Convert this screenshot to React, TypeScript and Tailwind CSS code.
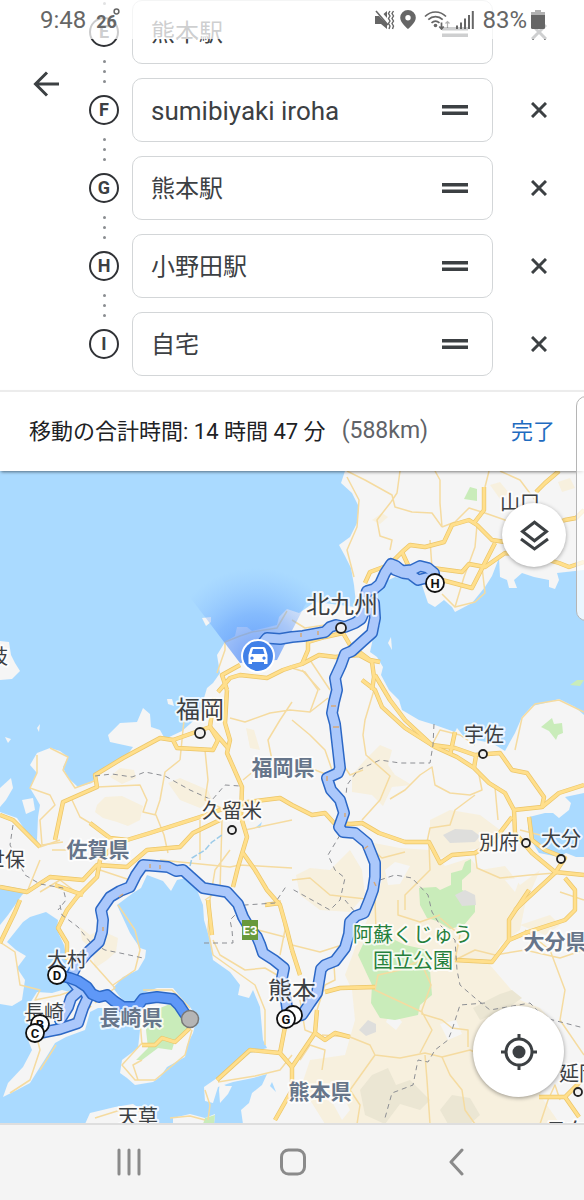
import React from 'react';

const stops = [
  { id: 'E', name: '熊本駅', size: 'text-[24px]' },
  { id: 'F', name: 'sumibiyaki iroha', size: 'text-[26px]' },
  { id: 'G', name: '熊本駅', size: 'text-[24px]' },
  { id: 'H', name: '小野田駅', size: 'text-[24px]' },
  { id: 'I', name: '自宅', size: 'text-[24px]' },
];

const land = [
  // Honshu
  'M347 465L341 483 352 493 359 507 357 523 350 537 339 545 345 556 351 568 354 585 356 603 362 600 366 588 380 584 395 577 409 580 422 585 428 603 435 607 444 600 452 607 455 612 472 603 485 587 492 576 499 558 500 577 507 580 509 588 517 588 514 580 522 573 534 577 549 580 549 587 555 589 559 580 557 573 584 570 584 465Z',
  // Kyushu
  'M379 599L379 610 376 618 380 625 374 632 372 643 370 652 377 657 383 667 381 675 389 690 399 700 402 710 419 720 435 725 455 732 457 728 465 738 492 743 505 751 515 733 522 717 532 706 545 703 559 699 575 707 584 715 584 793 565 797 571 803 569 810 559 818 553 813 545 813 529 817 528 828 531 840 539 853 559 857 566 853 576 857 584 857 584 1124 243 1124 241 1110 249 1103 252 1093 262 1085 267 1074 253 1078 233 1082 218 1087 213 1103 205 1101 204 1087 217 1078 233 1067 250 1053 267 1048 263 1040 260 1007 253 990 249 998 238 995 240 985 230 972 213 960 210 940 204 920 203 905 197 890 190 877 177 880 171 891 163 881 147 875 141 888 133 893 117 905 130 933 140 948 146 950 145 958 138 970 123 977 113 988 120 997 127 1003 137 1002 143 993 157 988 173 988 183 1000 190 1007 197 1017 193 1033 187 1045 185 1057 167 1067 160 1077 153 1082 135 1085 127 1078 120 1073 122 1060 138 1048 140 1030 133 1014 115 1008 98 1008 90 1012 85 1030 66 1037 55 1043 47 1056 40 1067 30 1083 17 1090 3 1097 8 1083 23 1067 32 1050 28 1040 33 1030 25 1020 27 1008 37 992 52 993 62 990 78 994 72 975 67 960 64 945 57 930 58 920 46 912 30 917 23 922 7 942 16 950 26 956 17 968 25 980 22 1000 12 1006 0 1004 0 925 8 915 22 895 27 890 0 885 0 812 17 818 27 833 37 840 38 817 40 805 36 798 30 788 37 773 30 765 37 753 50 748 60 751 68 757 63 767 67 777 78 787 92 783 97 773 110 767 125 758 133 747 110 742 108 735 120 723 137 722 143 708 150 714 151 727 160 730 165 739 182 731 190 724 202 712 204 698 207 688 213 683 220 673 217 655 225 642 235 636 237 627 247 627 252 631 277 625 279 617 287 609 299 613 315 602 340 605 355 607 366 603Z',
  // islands
  'M0 641L9 642 11 655 15 663 20 671 12 679 0 680Z',
  'M202 618L211 617 211 622 206 626Z',
  'M0 788L11 778 13 788 6 800 0 807Z',
  'M22 800L33 798 35 810 26 814Z',
  'M37 728L40 724 39 732Z',
  'M5 737L11 739 8 743Z',
  'M167 699L172 699 174 706 168 704Z',
  'M388 643L391 637 392 650Z',
  'M85 1124L90 1113 115 1107 133 1104 147 1113 160 1124Z',
  'M173 1118L190 1114 205 1118 215 1114 214 1124 173 1124Z',
  'M220 1082L226 1086 232 1086 228 1094 220 1103 219 1090Z',
];

const hills = [
  'M97 805L105 797 122 796 143 806 140 820 128 826 117 822 103 818 95 812Z',
  'M168 783L180 778 208 790 212 800 200 808 180 800Z',
  'M110 777L120 768 134 770 136 778 122 784Z',
  'M80 927L90 935 100 930 118 938 116 952 107 960 95 968 92 950 82 940Z',
  'M352 775L365 760 380 745 392 750 388 765 395 775 412 785 392 787 383 806 372 795 352 792Z',
  'M358 840L400 848 430 850 445 866 470 858 480 870 505 866 520 885 540 870 525 905 520 930 500 945 490 965 520 1000 540 1008 560 1030 555 1060 540 1095 560 1124 325 1124 310 1100 300 1090 310 1060 345 1055 355 1020 352 990 345 975 358 940 374 905 382 880 372 860Z',
  'M430 820L450 810 480 815 500 830 495 845 470 850 440 858 430 840Z',
  'M296 875L310 868 330 870 350 850 362 870 365 895 350 912 320 910 300 895Z',
  'M490 485L500 482 509 493 500 499Z',
  'M558 482L570 478 575 488 562 492Z',
  'M246 728L254 730 260 750 250 748Z',
  'M372 520L382 513 388 517 380 524Z',
  'M520 925L550 915 560 925 545 935Z',
];

const shades = [
  'M443 835L455 829 472 830 480 836 475 842 450 843Z',
  'M359 1030L368 1020 376 1024 376 1032 366 1036Z',
  'M455 895L465 890 475 895 476 905 462 906Z',
];

const peaks = [
  'M488 1000L500 994 512 990 522 998 505 1010 480 1020 473 1008Z',
  'M360 1090L372 1075 388 1068 396 1085 410 1080 430 1100 420 1110 400 1104 385 1124 365 1115Z',
  'M440 1110L452 1095 470 1098 480 1115 470 1124 448 1124Z',
];

// valleys that cut into the hills
const plains = [
  'M385 870L395 862 410 866 400 884 388 885Z',
  'M440 1024L456 1020 462 1034 448 1040Z',
  'M330 1098L340 1090 350 1110 342 1120Z',
  'M392 1010L402 1022 396 1030 386 1022Z',
  'M505 880L520 878 515 892Z',
  'M490 1062L505 1056 515 1075 500 1082Z',
];

const parks = [
  'M464 499L470 487 477 489 477 501Z',
  'M541 727L552 718 554 724 562 723 563 733 558 735 556 740 549 731Z',
  'M419 888L436 887 440 890 451 885 451 873 462 870 465 862 471 859 471 872 462 880 462 890 475 896 475 912 464 925 450 929 437 921 427 918 420 905Z',
  'M365 940L385 935 405 945 428 950 430 970 432 995 420 1005 418 1015 395 1020 380 1018 371 1003 372 985 365 970 358 955Z',
  'M170 1004L180 1014 187 1018 187 1032 175 1040 172 1050 158 1048 142 1060 136 1060 148 1048 146 1030 150 1012Z',
  'M205 1118L215 1115 214 1124 203 1124Z',
  'M570 685L577 680 584 680 580 686Z',
];

const waters = [
  'M255 828L262 822 260 828Z',
  'M28 836L36 838 40 846 36 844Z',
  'M272 1082L276 1092 270 1086Z',
];

const minorRoads = [
  'M347 477L359 500 357 527 347 550 354 577',
  'M347 471L365 480 392 495 395 507 412 512 432 513 442 527 M435 471L440 480 440 503 442 527 M400 471L397 493 391 502',
  'M391 502L377 520 380 536 392 540 390 550 M442 527L455 522 469 508 485 513',
  'M477 525L475 547 464 577 455 607 475 602 485 593 482 567 M432 568L430 540 M489 471L485 487 M500 471L520 480 535 500',
  'M442 594L455 607 M485 513L505 520 520 535',
  'M225 642L240 636 252 632 277 628 287 611 M217 673L225 650 225 642',
  'M292 620L305 628 325 625 M302 670L320 690 M330 690L310 660',
  'M230 718L245 722 270 713 290 710 310 712 328 698 M292 702L280 720 268 740 272 760 255 770 243 780',
  'M292 720L310 735 325 750 332 770 M310 712L318 690 305 672 292 668 M328 775L310 768 300 772',
  'M374 690L365 720 363 735 366 755 390 776 380 800 362 820 M363 770L350 775 340 760',
  'M390 799L405 790 420 775 432 767 435 785 450 793 470 795 482 790 478 770 474 768',
  'M432 745L440 730 460 735 475 745 M427 842L430 828 450 825 455 810 475 795 M495 787L498 820',
  'M515 750L522 718 535 704 559 700 584 712',
  'M50 748L68 757 63 770 75 788 97 780 M37 755L37 773 30 788 50 795 55 805 40 820 42 845 63 842',
  'M97 787L140 785 147 800 143 812 156 815 164 835 168 853 M180 760L165 772 160 800 155 815 M180 760L185 710',
  'M205 750L208 780 205 800 225 810 M200 820L200 860 M72 800L80 817 90 823 M52 850L75 850',
  'M40 847L60 840 M27 892L40 860 M80 895L60 880 40 892 M100 870L130 880 M160 860L230 867 240 865 292 868',
  'M245 830L292 820 M210 900L215 870 230 850 M222 820L220 890 205 900',
  'M118 905L135 930 140 950 135 970 113 985 M90 960L115 988 95 1003',
  'M0 942L15 952 20 985 40 990 35 1000 60 995 75 990 M30 1010L40 1050 30 1080 10 1093 M56 1045L40 1070',
  'M143 990L172 990 190 1008 M142 1043L122 1065 135 1080 155 1080 185 1055 192 1030 M140 1020L142 1045 M142 1060L133 1065 138 1080',
  'M213 940L220 955 245 970 265 968 277 975 M210 900L208 930 213 955 255 985 265 1010 265 1045',
  'M258 930L285 937 M280 900L285 930 280 955 M292 945L320 952 345 944',
  'M218 1082L255 1076 280 1070 292 1055 M205 1090L210 1105 208 1120',
  'M300 1000L305 1030 325 1038 M317 1010L325 985 335 980 334 965 M300 1060L310 1045 325 1050 322 1070',
  'M322 1035L350 1037 370 1045 375 1055 400 1058 425 1053 442 1057 470 1050 485 1057',
  'M425 1055L427 1080 430 1124 M420 1053L432 1030 422 1012 375 990 378 975 400 970 420 960 431 985 422 1010 422 1014 442 1020 452 1028 468 1030 468 1047',
  'M442 1057L450 1075 462 1090 465 1110 475 1124 M375 1055L350 1090 360 1105 357 1124',
  'M375 900L376 930 M398 900L398 915 420 922 440 915 M440 918L460 935 455 960 M292 880L310 878 330 895 375 900',
  'M405 910L405 895 430 870 429 845 M525 930L550 950 565 990 560 1020 584 1055 M455 960L475 950 495 955 525 950 560 958 584 950',
  'M373 850L382 858 405 852 M475 852L477 868 500 878 530 875 555 873 M520 830L540 835 M584 900L560 892',
  'M560 1100L555 1085 548 1100 540 1124 M170 1118L190 1116 205 1120 M95 1118L130 1107 150 1115',
];

const mainRoads = [
  'M365 583L370 572 389 565 402 552 410 545 425 547 444 542 452 525 469 520 477 525 492 540 505 542 565 520 576 518 584 510',
  'M432 568L462 572 469 564 485 567 505 553 530 555 559 563 569 567 584 562',
  'M442 580L472 588 495 543 M484 487L484 510 474 523 M536 492L545 483 559 471 M402 552L408 565',
  'M292 667L302 664 319 655 335 657 359 655 372 662 374 677 372 690',
  'M302 664L308 650 308 642 325 637 343 633 350 645 370 660 380 662',
  'M218 692L230 678 240 675 267 678 283 670 292 667 M227 690L222 675 240 665',
  'M214 698L210 727 173 740 177 748 213 750 218 740 210 727',
  'M173 740L160 738 123 758 95 775 97 787 63 802 55 840',
  'M227 690L225 723 230 740 227 753 242 787 241 817 247 837 238 867 233 887',
  'M210 727L228 748',
  'M350 824L334 823 325 813 312 815 292 805 280 798 240 803 200 817 150 833 127 840 110 850 100 860 97 877 77 897 67 910 58 928 67 943 67 960',
  'M90 823L110 838 127 840 M220 820L193 833 180 847 147 850 127 867 97 865 83 880 50 877 27 892 0 887 M83 895L55 885',
  'M0 815L13 820 40 847 M243 853L255 870 267 890 280 905 287 930 292 950',
  'M350 824L362 823 379 833 405 842 429 842 440 863 452 855 475 853 492 843 512 817',
  'M362 680L375 690 382 707 405 728 435 747 457 757 474 768 489 783 505 793 514 810 515 833 532 853 555 872 584 875',
  'M375 675L390 700 405 720 432 745 455 748 475 755 500 753 512 770 527 773 544 797 542 807 514 810 M455 732L450 755 M474 768L476 756',
  'M584 785L559 793 542 807 M529 817L532 840 545 850 565 858 555 873 529 897 515 910',
  'M565 878L575 890 575 910 565 920 528 932 509 940 492 962 455 960 M529 890L509 920 509 940',
  'M317 1010L315 1033 292 1067 292 1090 275 1120 M315 1033L325 1040 335 1033 350 1037 M325 992L340 988 375 987',
  'M292 1067L280 1053 250 1050 217 1080 M285 1027L280 1053 M265 905L280 903 M292 950L300 975',
  'M539 1097L565 1097 582 1080 M565 1097L579 1117 M142 1045L155 1045 162 1038 175 1042 190 1028',
  'M0 943L15 912 20 900 M208 900L212 935 M40 1035L60 1033 90 1005',
];

const borders = [
  'M95 776L112 774 132 777 145 772 165 776 190 790 212 800 225 785 240 786',
  'M13 825L10 845 25 875 40 884 63 888 66 900 58 910',
  'M60 905L62 915 78 927 90 942 105 950 120 953 143 958',
  'M204 943L233 943 232 930 230 920 245 905 275 903 287 885',
  'M434 724L433 745 430 763 400 763 380 760 358 770 347 785 346 795',
  'M340 835L328 855 335 870 345 878 340 900 330 910 312 900 292 889 M345 900L355 912 M380 880L395 875 412 878 428 895 432 912 440 925 455 940 457 970 460 985 475 998 490 1010 530 1003 545 1018 584 1028',
  'M485 1003L460 1005 452 1030 448 1040 435 1050 428 1062 418 1060 413 1085 392 1093 385 1118',
];

const routes = [
  'M262 644L267 638 280 639 292 637 303 636 314 634 325 632 330 627 336 625 345 627 355 623 361 619 364 612 364 600 367 591 374 589 380 584 385 573 391 564 396 566 402 571 412 570 420 566 428 568 434 573 435 583 M395 570L403 573 410 574 418 580 426 578 435 583',
  'M374 603L375 618 372 633 363 641 352 651 345 654 341 665 335 678 337 690 334 702 332 713 335 724 340 768 338 773 327 778 331 790 340 800 344 813 339 827 343 832 355 833 367 843 371 853 375 863 375 877 373 890 369 901 364 913 356 916 350 922 349 934 345 948 335 961 325 965 321 969 317 993 310 1003 302 1015 288 1017',
  'M288 1015L286 1000 282 978 284 968 274 960 263 953 260 944 257 937 250 929 243 917 238 904 227 892 215 890 203 888 193 879 183 870 176 871 168 867 156 866 143 865 136 875 130 887 120 891 110 897 101 910 103 920 102 932 99 942 87 953 77 965 70 978 80 990 71 998 68 1007 60 1020',
  'M80 983L88 997 83 1008 78 1023 60 1029 40 1033',
];

const activeRoute = 'M62 976L70 978 78 981 87 987 92 994 99 997 107 995 114 1001 123 1007 137 1007 143 999 150 998 157 997 173 999 179 1005 185 1014';

const cities = [
  { name: '山口', x: 520, y: 510, size: 'text-[20px]' },
  { name: '北九州', x: 342, y: 613, size: 'text-[24px]' },
  { name: '福岡', x: 200, y: 718, size: 'text-[24px]' },
  { name: '久留米', x: 232, y: 818, size: 'text-[20px]' },
  { name: '宇佐', x: 484, y: 742, size: 'text-[20px]' },
  { name: '別府', x: 499, y: 850, size: 'text-[20px]' },
  { name: '大分', x: 561, y: 846, size: 'text-[20px]' },
  { name: '大村', x: 67, y: 967, size: 'text-[20px]' },
  { name: '長崎', x: 44, y: 1020, size: 'text-[20px]' },
  { name: '熊本', x: 292, y: 999, size: 'text-[24px]' },
  { name: '天草', x: 138, y: 1124, size: 'text-[20px]' },
  { name: '延岡', x: 579, y: 1081, size: 'text-[20px]' },
  { name: '日向', x: 566, y: 1138, size: 'text-[20px]' },
  { name: '佐世保', x: -5, y: 867, size: 'text-[20px]' },
  { name: '壱岐', x: -12, y: 664, size: 'text-[20px]' },
];

const prefectures = [
  { name: '福岡県', x: 283, y: 775 },
  { name: '佐賀県', x: 98, y: 857 },
  { name: '長崎県', x: 131, y: 1025 },
  { name: '熊本県', x: 320, y: 1099 },
  { name: '大分県', x: 555, y: 949 },
];

const cityDots = [
  { x: 341, y: 628, r: 5 },
  { x: 200, y: 733, r: 5 },
  { x: 232, y: 830, r: 4 },
  { x: 483, y: 754, r: 4 },
  { x: 526, y: 843, r: 4 },
  { x: 561, y: 859, r: 4 },
  { x: 578, y: 1092, r: 4 },
];

const pins = [
  { id: '', x: 293, y: 1015 },
  { id: 'G', x: 286, y: 1019 },
  { id: 'B', x: 40, y: 1024 },
  { id: 'C', x: 35, y: 1033 },
  { id: 'D', x: 57, y: 975 },
  { id: 'H', x: 435, y: 583 },
];

const StatusBar: React.FC = () => (
  <div className="absolute inset-x-0 top-0 z-20 flex h-[39px] items-center bg-white/75 pl-10 pr-[39px] text-[24px] text-[#666]">
    <span>9:48</span>
    <span className="ml-2.5 flex items-start pt-1 text-[18px] font-bold leading-5">
      26
      <svg className="-ml-1 -mt-1 h-[7px] w-[7px]" viewBox="0 0 7 7" fill="none" stroke="currentColor" strokeWidth="1.5">
        <circle cx="3.5" cy="3.5" r="2.4" />
      </svg>
    </span>
    <div className="ml-auto flex items-center">
      <svg className="h-5 w-5" viewBox="0 0 20 20" fill="currentColor">
        <path d="M0 6h4l8 8v5l-6-5H0zM8.500 4L12 1v7z" />
        <path d="M1 1l12 14" stroke="currentColor" strokeWidth="1.6" />
        <path d="M15 1l-1.500 2.500L15 6l-1.500 2.500L15 11l-1.500 2.500L15 16l-1 3M18.500 1L17 3.500 18.500 6 17 8.500l1.500 2.500L17 13.500l1.500 2.500-1 3" fill="none" stroke="currentColor" strokeWidth="1.400" />
      </svg>
      <svg className="ml-[5px] h-[19px] w-4" viewBox="0 0 16 19" fill="currentColor" fillRule="evenodd">
        <path d="M8 0a7.800 7.800 0 0 0-7.800 7.800C.2 13 8 19 8 19s7.800-6 7.800-11.200A7.800 7.800 0 0 0 8 0zm0 5a2.700 2.700 0 1 1 0 5.400A2.700 2.700 0 0 1 8 5z" />
      </svg>
      <svg className="ml-2 h-5 w-[27px]" viewBox="0 0 27 20" fill="none" stroke="currentColor" strokeWidth="1.700">
        <path d="M1 6.500C7 .5 16 .5 22 6.500M4.300 9.700c4.200-4 10.200-4 14.400 0M7.500 12.800c2.500-2.200 5.500-2.200 8 0" />
        <circle cx="11.500" cy="15.500" r="1.800" fill="currentColor" stroke="none" />
        <path d="M17.500 12.500v6M15.300 16.500l2.200 2.500 2.200-2.500" />
        <path d="M23.500 18v-6M21.500 13.500l2-2 2 2" strokeWidth="1.200" opacity=".5" />
      </svg>
      <svg className="ml-1 h-[19px] w-[19px]" viewBox="0 0 19 19" stroke="currentColor" strokeWidth="2">
        <path d="M2 15.500V19M6 12.500V19M10 8.500V19M14 5v14M17.800 1v18" />
      </svg>
      <span className="ml-2">83%</span>
      <svg className="ml-1 h-[19px] w-3.5" viewBox="0 0 14 19" fill="currentColor">
        <path d="M4 0h6v2h4v3H0V2h4z" opacity=".5" />
        <path d="M0 5h14v12.500q0 1.500-1.500 1.500h-11Q0 19 0 17.500z" />
      </svg>
    </div>
  </div>
);

const Dots: React.FC = () => (
  <div className="flex h-12 flex-col items-center justify-center gap-[7px]">
    <span className="h-[3px] w-[3px] rounded-full bg-[#8a8d91]" />
    <span className="h-[3px] w-[3px] rounded-full bg-[#8a8d91]" />
    <span className="h-[3px] w-[3px] rounded-full bg-[#8a8d91]" />
  </div>
);

const StopList: React.FC = () => (
  <header className="flex bg-white pb-3.5">
    <div className="w-[88px] shrink-0 pl-[26px] pt-16">
      <button type="button" aria-label="戻る" className="flex h-10 w-10 items-center justify-center">
        <svg className="h-[26px] w-[26px]" viewBox="0 0 26 26" fill="none" stroke="#3c4043" strokeWidth="3">
          <path d="M26 13H2.500M14 1.500L2.500 13 14 24.500" />
        </svg>
      </button>
    </div>
    <div className="flex w-8 shrink-0 flex-col items-center pt-0.5">
      <span className="mb-3 h-[3px] w-[3px] shrink-0 rounded-full bg-[#8a8d91]" />
      {stops.map((stop, i) => (
        <React.Fragment key={stop.id}>
          {i > 0 && <Dots />}
          <span className="flex h-[30px] w-[30px] items-center justify-center rounded-full border-2 border-[#303236] text-[18px] font-bold leading-none text-[#3c4043]">
            {stop.id}
          </span>
        </React.Fragment>
      ))}
    </div>
    <ul className="flex min-w-0 flex-1 flex-col gap-3.5 pl-3">
      {stops.map((stop) => (
        <li key={stop.id} className="flex">
          <div className="flex h-16 min-w-0 flex-1 items-center rounded-[10px] border border-[#d3d6d8] pl-[18px] pr-6">
            <input
              type="text"
              aria-label={stop.id}
              defaultValue={stop.name}
              className={`min-w-0 flex-1 bg-transparent pt-0.5 text-[#3c4043] outline-none ${stop.size}`}
            />
            <svg className="h-2.5 w-[26px] shrink-0" viewBox="0 0 26 10" fill="#3c4043">
              <path d="M0 0h26v3.500H0zM0 6.500h26V10H0z" />
            </svg>
          </div>
          <button type="button" aria-label={`${stop.id} を削除`} className="flex w-[91px] shrink-0 items-center justify-center">
            <svg className="h-4 w-4" viewBox="0 0 16 16" stroke="#3c4043" strokeWidth="3">
              <path d="M1 1l14 14M15 1L1 15" />
            </svg>
          </button>
        </li>
      ))}
    </ul>
  </header>
);

const Summary: React.FC = () => (
  <div className="relative z-10 flex min-h-[81px] items-center border-t-2 border-[#ececec] bg-white px-[29px] text-[22px] shadow-[0_2px_3px_-1px_rgba(0,0,0,0.5)]">
    <p className="text-[#202124]">移動の合計時間: 14 時間 47 分</p>
    <p className="ml-4 text-[23px] text-[#5f6368]">(588km)</p>
    <button type="button" className="ml-auto text-[#1f6bc0]">完了</button>
  </div>
);

const RouteMap: React.FC = () => (
  <main className="relative overflow-hidden bg-[#aadaff]">
    <svg className="block h-auto w-full" viewBox="0 471 584 652" strokeLinejoin="round">
      <defs>
        <radialGradient id="beam" gradientUnits="userSpaceOnUse" cx="256" cy="660" r="92">
          <stop offset="0" stopColor="#4d88f8" stopOpacity=".8" />
          <stop offset=".5" stopColor="#5f9bfb" stopOpacity=".5" />
          <stop offset="1" stopColor="#7fb4ff" stopOpacity="0" />
        </radialGradient>
      </defs>
      <g fill="#f5f5f5">{land.map((d) => <path key={d} d={d} />)}</g>
      <g fill="#f7f0de">{hills.map((d) => <path key={d} d={d} />)}</g>
      <g fill="#f5f5f5">{plains.map((d) => <path key={d} d={d} />)}</g>
      <g fill="#c9ecba">{parks.map((d) => <path key={d} d={d} />)}</g>
      <g fill="#dededc">{shades.map((d) => <path key={d} d={d} />)}</g>
      <g fill="#ebe6d3">{peaks.map((d) => <path key={d} d={d} />)}</g>
      <g fill="#aadaff">{waters.map((d) => <path key={d} d={d} />)}</g>
      <g fill="none" stroke="#f5dba0" strokeWidth="1.500">{minorRoads.map((d) => <path key={d} d={d} />)}</g>
      <g fill="none" stroke="#ecc669" strokeWidth="4.400">{mainRoads.map((d) => <path key={d} d={d} />)}</g>
      <g fill="none" stroke="#ffdf8c" strokeWidth="3">{mainRoads.map((d) => <path key={d} d={d} />)}</g>
      <g fill="none" stroke="#8d8f94" strokeWidth="1" strokeDasharray="5 4">{borders.map((d) => <path key={d} d={d} />)}</g>
      <path d="M190 866L192 858 205 850 212 842 222 835" fill="none" stroke="#9ccbe8" strokeWidth="1.500" strokeDasharray="6 2" />

      <path d="M240 663L186 592 205 565 305 560 325 566 277 660Z" fill="url(#beam)" />
      <g fill="none" strokeLinecap="round">
        <g stroke="#2c68c6" strokeWidth="12">{routes.map((d) => <path key={d} d={d} />)}</g>
        <g stroke="#abc8fb" strokeWidth="9">{routes.map((d) => <path key={d} d={d} />)}</g>
        <path d={activeRoute} stroke="#2c68c6" strokeWidth="12" />
        <path d={activeRoute} stroke="#5f98f7" strokeWidth="9" />
      </g>
      <path d="M331 706h5M333 727h6M327 776v5M345 813v4M364 849l4-3M374 882l2 4M150 864v4M160 865v4M119 897l4-3M103 927v4M301 633v4M318 631v4" stroke="#d6a87a" strokeWidth="1.500" />

      <rect x="242" y="920" width="16" height="20" fill="#68993c" />
      <text x="250" y="935" textAnchor="middle" fill="#fff" className="text-[13px] font-bold">E3</text>

      <g textAnchor="middle" strokeWidth="4" stroke="#fff" strokeOpacity=".8" className="[paint-order:stroke]">
        {cities.map((c) => (
          <text key={c.name} x={c.x} y={c.y} fill="#3c4043" className={c.size}>{c.name}</text>
        ))}
        {prefectures.map((p) => (
          <text key={p.name} x={p.x} y={p.y} fill="#66758a" className="text-[21px] font-bold">{p.name}</text>
        ))}
        <text x="413" y="942" fill="#25803c" className="text-[20px]">阿蘇くじゅう</text>
        <text x="413" y="968" fill="#25803c" className="text-[20px]">国立公園</text>
      </g>

      <g fill="#f1f1f1" stroke="#222" strokeWidth="1.800">
        {cityDots.map((c) => <circle key={c.x} cx={c.x} cy={c.y} r={c.r} />)}
      </g>
      <circle cx="190" cy="1019" r="8.500" fill="#b5b5b5" stroke="#777" strokeWidth="1.500" />
      {pins.map((pin) => (
        <g key={pin.id}>
          <circle cx={pin.x} cy={pin.y} r="9" fill="#fff" stroke="#111" strokeWidth="1.800" />
          <text x={pin.x} y={pin.y + 5} textAnchor="middle" fill="#111" className="text-[13px] font-bold">{pin.id}</text>
        </g>
      ))}

      <circle cx="258" cy="656" r="17" fill="#fff" />
      <circle cx="258" cy="656" r="15" fill="#4080e8" />
      <path fillRule="evenodd" fill="#fff" d="M252.500 647h11q1.500 0 2 1.500l2 6.500v9h-3.500v-2h-12v2h-3.500v-9l2-6.500q.5-1.500 2-1.500zm.5 2l-1.500 5h13l-1.500-5zM252 656.500a1.600 1.600 0 1 0 .01 0zM264 656.500a1.600 1.600 0 1 0 .01 0z" />
    </svg>

    <button type="button" aria-label="レイヤ" className="absolute right-[18px] top-8 flex h-16 w-16 items-center justify-center rounded-full bg-white shadow-[0_1px_4px_rgba(0,0,0,0.35)]">
      <svg className="h-[31px] w-[29px]" viewBox="0 0 29 31" fill="none" stroke="#3c4043" strokeWidth="3">
        <path d="M14.500 2.200L26.500 11.500 14.500 20.800 2.500 11.500zM1 19l13.500 10L28 19" />
      </svg>
    </button>
    <button type="button" aria-label="現在地" className="absolute bottom-[26px] right-5 flex h-[91px] w-[91px] items-center justify-center rounded-full bg-white shadow-[0_1px_4px_rgba(0,0,0,0.4)]">
      <svg className="h-9 w-9" viewBox="0 0 36 36" fill="none" stroke="#3c4043" strokeWidth="3">
        <circle cx="18" cy="18" r="13" />
        <circle cx="18" cy="18" r="6.500" fill="#3c4043" stroke="none" />
        <path d="M18 0v5M18 31v5M0 18h5M31 18h5" />
      </svg>
    </button>
  </main>
);

const NavBar: React.FC = () => (
  <nav className="flex flex-1 items-center justify-between border-t-2 border-[#dedede] bg-[#f4f4f4] px-[117px] pb-[22px] pt-5 text-[#8a8a8a]">
    <button type="button" aria-label="履歴">
      <svg className="h-7 w-6" viewBox="0 0 24 28" stroke="currentColor" strokeWidth="3" strokeLinecap="round">
        <path d="M2 2v24M12 2v24M22 2v24" />
      </svg>
    </button>
    <button type="button" aria-label="ホーム">
      <svg className="h-7 w-[26px]" viewBox="0 0 26 28" fill="none" stroke="currentColor" strokeWidth="3">
        <rect x="1.500" y="2" width="23" height="24" rx="7" />
      </svg>
    </button>
    <button type="button" aria-label="戻る">
      <svg className="h-7 w-[22px]" viewBox="0 0 22 28" fill="none" stroke="currentColor" strokeWidth="3" strokeLinecap="round" strokeLinejoin="round">
        <path d="M17 2L6 14l11 12" />
      </svg>
    </button>
  </nav>
);

const App: React.FC = () => {
  return (
    <div className="relative flex min-h-screen flex-col overflow-hidden bg-white font-['Roboto','Noto_Sans_CJK_JP',sans-serif]">
      <StatusBar />
      <StopList />
      <Summary />
      <RouteMap />
      <NavBar />
      <div className="absolute -right-2 top-[396px] z-20 h-[225px] w-4 rounded-l-[10px] border border-[#b5b5b5] bg-white/75" />
    </div>
  );
};

export default App;
